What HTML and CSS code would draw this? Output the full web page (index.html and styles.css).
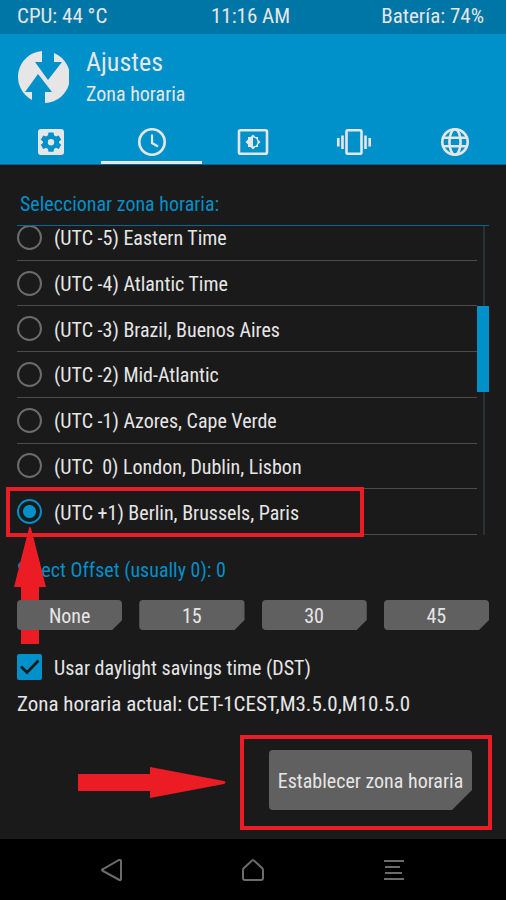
FILE: index.html
```html
<!DOCTYPE html>
<html lang="es">
<head>
<meta charset="utf-8">
<meta name="viewport" content="width=device-width, initial-scale=1">
<title>Ajustes – Zona horaria</title>
<link rel="stylesheet" href="styles.css">
</head>
<body>
<div class="statusbar">
  <span>CPU: 44 °C</span>
  <span class="clock">11:16 AM</span>
  <span class="battery">Batería: 74%</span>
</div>

<header class="header">
  <div class="brand">
    <svg class="logo" viewBox="0 0 52 52" aria-hidden="true">
      <path fill="#e6e6e6" d="M25 0V11H18L31 29L45 11H37V2A26 26 0 0 1 28 52V41H35L21 23L8 41H15V49A26 26 0 0 1 25 0Z"/>
    </svg>
    <div>
      <h1 class="title">Ajustes</h1>
      <p class="subtitle">Zona horaria</p>
    </div>
  </div>
  <nav class="tabs">
    <a class="tab" href="#general" aria-label="General">
      <svg viewBox="0 0 34 34"><path fill="#e6e6e6" fill-rule="evenodd" d="M7 4H27Q30 4 30 7V27Q30 30 27 30H7Q4 30 4 27V7Q4 4 7 4ZM14.5 7.5L14 10.3L12 11.5L9.3 10.5L6.8 14.8L9 16.5V18L6.8 19.7L9.3 24L12 22.8L14 24L14.5 26.8H19.5L20 24L22 22.8L24.7 24L27.2 19.7L25 18V16.5L27.2 14.8L24.7 10.5L22 11.5L20 10.3L19.5 7.5ZM17 14A3.2 3.2 0 0 1 17 20.4A3.2 3.2 0 0 1 17 14Z"/></svg>
    </a>
    <a class="tab tab-active" href="#zona" aria-label="Zona horaria" aria-current="page">
      <svg viewBox="0 0 34 34" fill="none" stroke="#e6e6e6"><circle cx="17" cy="17" r="12.7" stroke-width="2.6"/><path stroke-width="2.2" d="M17 9.5V18L23 21.5"/></svg>
    </a>
    <a class="tab" href="#pantalla" aria-label="Pantalla">
      <svg viewBox="0 0 34 34"><rect x="3" y="5.2" width="28" height="23.6" rx="1.5" fill="none" stroke="#e6e6e6" stroke-width="2.6"/><path fill="#e6e6e6" fill-rule="evenodd" d="M17 9.500L19.500 12H22V14.500L24.500 17L22 19.500V22H19.500L17 24.500L14.500 22H12V19.500L9.500 17L12 14.500V12H14.500ZM17 12.500V21.500A4.500 4.500 0 0 0 17 12.500Z"/></svg>
    </a>
    <a class="tab" href="#vibracion" aria-label="Vibración">
      <svg viewBox="0 0 34 34" fill="none" stroke="#e6e6e6" stroke-width="2.6"><rect x="9.5" y="5.2" width="15" height="23.6" rx="1.5"/><path d="M1.3 13V21.5M5.5 10.5V24M28.5 10.5V24M32.7 13V21.5"/></svg>
    </a>
    <a class="tab" href="#idioma" aria-label="Idioma">
      <svg viewBox="0 0 34 34" fill="none" stroke="#e6e6e6" stroke-width="2.6"><circle cx="17" cy="17" r="12.7"/><ellipse cx="17" cy="17" rx="5.6" ry="12.7"/><path d="M5.5 12.7H28.5M5.5 21.3H28.5"/></svg>
    </a>
  </nav>
</header>

<main class="content">
  <h2 class="label list-label">Seleccionar zona horaria:</h2>
  <div class="picker">
    <div class="viewport">
      <div class="zones">
        <label class="zone"><input class="radio" type="radio" name="zone"><span>(UTC -5) Eastern Time</span></label>
        <label class="zone"><input class="radio" type="radio" name="zone"><span>(UTC -4) Atlantic Time</span></label>
        <label class="zone"><input class="radio" type="radio" name="zone"><span>(UTC -3) Brazil, Buenos Aires</span></label>
        <label class="zone"><input class="radio" type="radio" name="zone"><span>(UTC -2) Mid-Atlantic</span></label>
        <label class="zone"><input class="radio" type="radio" name="zone"><span>(UTC -1) Azores, Cape Verde</span></label>
        <label class="zone"><input class="radio" type="radio" name="zone"><span>(UTC&nbsp; 0) London, Dublin, Lisbon</span></label>
        <label class="zone"><input class="radio" type="radio" name="zone" checked><span>(UTC +1) Berlin, Brussels, Paris</span></label>
      </div>
      <div class="track"><div class="thumb"></div></div>
    </div>
    <div class="mark mark-zone"></div>
    <svg class="arrow-up" viewBox="0 0 32 118" aria-hidden="true"><path fill="#ec1c24" d="M15 1Q16 -1 17 1L32 60H25V117H7V60H0Z"/></svg>
  </div>

  <h2 class="label offset-label">Select Offset (usually 0): 0</h2>
  <div class="offsets">
    <button class="button" type="button">None</button>
    <button class="button" type="button">15</button>
    <button class="button" type="button">30</button>
    <button class="button" type="button">45</button>
  </div>

  <label class="dst"><input class="check" type="checkbox" checked><span>Usar daylight savings time (DST)</span></label>
  <p class="current">Zona horaria actual: CET-1CEST,M3.5.0,M10.5.0</p>

  <div class="actions">
    <svg class="arrow-right" viewBox="0 0 148 32" aria-hidden="true"><path fill="#ec1c24" d="M0 7H72V0L146 14Q149 15.500 146 17L72 31V24H0Z"/></svg>
    <div class="confirm">
      <button class="button button-large" type="button">Establecer zona horaria</button>
      <div class="mark mark-confirm"></div>
    </div>
  </div>
</main>

<footer class="navbar">
  <button class="nav" type="button" aria-label="Atrás"><svg viewBox="0 0 24 24"><path d="M20 2Q21 2 21 3V21Q21 22.500 19.500 22L3 13Q1 12 3 11L19 2Z"/></svg></button>
  <button class="nav" type="button" aria-label="Inicio"><svg viewBox="0 0 24 24"><path d="M12 2Q12.500 2 21 10Q22 11 22 12V20Q22 22 20 22H4Q2 22 2 20V12Q2 11 3 10Q11.500 2 12 2Z"/></svg></button>
  <button class="nav" type="button" aria-label="Registro"><svg viewBox="0 0 24 24"><path d="M2 3H22M3 9H18M3 15H20M2 21H22"/></svg></button>
</footer>
</body>
</html>
```
FILE: styles.css
```css
* { box-sizing: border-box; }

body {
  margin: 0;
  min-height: 100vh;
  display: flex;
  flex-direction: column;
  background: #1a1a1a;
  color: #e6e6e6;
  font-family: "Roboto Condensed", "Liberation Sans Narrow", Roboto, sans-serif;
  font-size: 20px;
  line-height: 24px;
}

h1, h2, p { margin: 0; font-weight: 400; }

.statusbar {
  display: grid;
  grid-template-columns: 1fr auto 1fr;
  align-items: center;
  height: 34px;
  padding: 0 22px 2px 17px;
  background: #0076a6;
  font-size: 21px;
}
.battery { text-align: right; }

.header {
  background: #0090ca;
  border-bottom: 1px solid #006a94;
}
.brand {
  display: flex;
  gap: 17px;
  padding: 12px 17px 0;
}
.logo { width: 52px; height: 52px; margin-top: 5px; }
.title { font-size: 26px; line-height: 32px; }
.subtitle { line-height: 32px; }

.tabs {
  display: grid;
  grid-template-columns: repeat(5, 1fr);
  margin-top: 9px;
}
.tab {
  display: flex;
  justify-content: center;
  height: 45px;
  padding-top: 6px;
  border-bottom: 3px solid transparent;
}
.tab-active { border-bottom-color: #e6e6e6; }
.tab svg { width: 34px; height: 34px; }

.content { flex: 1; padding: 27px 17px 0; }
.label { color: #0090ca; font-size: 20px; }
.list-label { padding-left: 3px; }

.picker { position: relative; margin-top: 9px; }
.viewport {
  display: flex;
  align-items: flex-end;
  height: 310px;
  overflow: hidden;
  border-top: 1px solid #006a94;
}
.zones {
  flex: 1;
  display: grid;
  grid-template-rows: repeat(7, 1fr);
  height: 320px;
}
.zone, .dst { display: flex; align-items: center; gap: 12px; }
.zone { border-bottom: 1px solid #4c4c4c; }
.zone span, .dst span { padding-top: 2px; }

.radio {
  appearance: none;
  width: 25px;
  height: 25px;
  margin: 0;
  border: 2px solid #6c6c6c;
  border-radius: 50%;
}
.radio:checked {
  border-color: #0090ca;
  background: radial-gradient(circle, #0090ca 6px, transparent 7px);
}

.track {
  width: 12px;
  height: 100%;
  padding-top: 80px;
  background: linear-gradient(#2c3033, #2c3033) 6px 0 / 2px 100% no-repeat;
}
.thumb { height: 86px; background: #0090ca; }

.mark { position: absolute; border: 4px solid #ec1c24; }
.mark-zone { left: -11px; bottom: -2px; width: 358px; height: 50px; }
.arrow-up { position: absolute; left: -3px; top: 302px; width: 32px; height: 118px; }

.offset-label { margin-top: 23px; }
.offsets {
  display: grid;
  grid-template-columns: repeat(4, 1fr);
  gap: 17px;
  margin-top: 18px;
}
.button {
  height: 30px;
  padding: 2px 0 0;
  border: 0;
  border-radius: 4px;
  background: #606060;
  color: #e6e6e6;
  font: inherit;
  clip-path: polygon(0 0, 100% 0, 100% calc(100% - 10px), calc(100% - 10px) 100%, 0 100%);
}

.dst { margin-top: 24px; }
.check {
  appearance: none;
  width: 25px;
  height: 26px;
  margin: 0;
  border-radius: 2px;
  background: #0090ca;
}
.check:checked {
  background: #0090ca url("data:image/svg+xml,%3Csvg xmlns='http://www.w3.org/2000/svg' viewBox='0 0 25 26'%3E%3Cpath d='M4 12.500L10 18.500L21.500 6.500' fill='none' stroke='%231a1a1a' stroke-width='2.800'/%3E%3C/svg%3E") center / 100% 100%;
}
.current { margin-top: 12px; font-size: 21px; }

.actions {
  display: flex;
  justify-content: flex-end;
  align-items: center;
  gap: 43px;
  margin-top: 34px;
  padding-right: 17px;
}
.arrow-right { width: 148px; height: 32px; margin-top: 6px; }
.confirm { position: relative; }
.button-large {
  display: block;
  width: 203px;
  height: 60px;
  clip-path: polygon(0 0, 100% 0, 100% calc(100% - 20px), calc(100% - 20px) 100%, 0 100%);
}
.mark-confirm { inset: -15px -20px -20px -29px; }

.navbar {
  display: grid;
  grid-template-columns: repeat(3, 1fr);
  align-items: center;
  height: 61px;
  padding: 0 42px;
  background: #000;
}
.nav {
  display: grid;
  justify-items: center;
  padding: 0;
  border: 0;
  background: none;
}
.nav svg {
  width: 24px;
  height: 24px;
  fill: none;
  stroke: #6c6c6c;
  stroke-width: 2px;
}
```
